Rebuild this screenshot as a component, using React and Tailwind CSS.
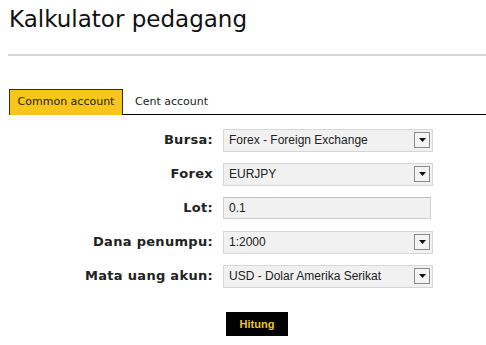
import React, { useState } from 'react';

const tahoma = { fontFamily: '"DejaVu Sans", Verdana, sans-serif' };

const Arrow = () => (
  <span className="flex h-[16px] w-[16px] items-center justify-center border border-[#8a8a8a] bg-[#f4f4f4]">
    <svg width="7" height="4" viewBox="0 0 7 4">
      <path d="M0 0h7L3.5 4z" fill="#111" />
    </svg>
  </span>
);

const SelectBox = ({ value, width = 'w-[210px]' }) => (
  <div className={`flex h-[23px] ${width} items-center justify-between border border-[#d6d6d6] bg-[#f1f1f1] pl-[5px] pr-[2px]`}>
    <span className="font-['Liberation_Sans',Arial,sans-serif] text-[12px] text-[#222]">{value}</span>
    <Arrow />
  </div>
);

const Row = ({ label, children }) => (
  <div className="flex h-[34px] items-center">
    <div style={tahoma} className="w-[214px] pr-[1px] text-right text-[13px] tracking-[0.3px] font-bold text-[#222]">{label}</div>
    <div className="ml-[9px]">{children}</div>
  </div>
);

export default function App() {
  const [tab, setTab] = useState('common');

  return (
    <div className="min-h-[345px] w-[486px] bg-white">
      <h1 style={tahoma} className="pl-[9px] pt-[4px] text-[23px] leading-[30px] text-[#111]">
        Kalkulator pedagang
      </h1>
      <div className="ml-[8px] mt-[20px] h-[2px] bg-[#d6d6d6]" />

      <div className="ml-[9px] mt-[33px] flex h-[26px] border-b border-black">
        <button
          onClick={() => setTab('common')}
          style={tahoma}
          className={`h-[26px] w-[114px] border border-b-0 text-[11px] ${tab === 'common' ? 'border-[#3a2e00] bg-[#f8c61a]' : 'border-transparent'} text-[#222]`}
        >
          Common account
        </button>
        <button
          onClick={() => setTab('cent')}
          style={tahoma}
          className={`h-[26px] px-[11px] border border-b-0 text-[11px] ${tab === 'cent' ? 'border-[#3a2e00] bg-[#f8c61a]' : 'border-transparent'} text-[#222]`}
        >
          Cent account
        </button>
      </div>

      <div className="mt-[8px]">
        <Row label="Bursa:"><SelectBox value="Forex - Foreign Exchange" /></Row>
        <Row label="Forex"><SelectBox value="EURJPY" /></Row>
        <Row label="Lot:">
          <div className="flex h-[22px] w-[208px] items-center border border-[#cfcfcf] border-t-[#bdbdbd] bg-[#f1f1f1] pl-[5px]">
            <span className="font-['Liberation_Sans',Arial,sans-serif] text-[12px] text-[#222]">0.1</span>
          </div>
        </Row>
        <Row label="Dana penumpu:"><SelectBox value="1:2000" /></Row>
        <Row label="Mata uang akun:"><SelectBox value="USD - Dolar Amerika Serikat" /></Row>
      </div>

      <div className="ml-[226px] mt-[17px]">
        <button className="h-[24px] w-[62px] bg-black font-['Liberation_Sans',Arial,sans-serif] text-[11px] font-bold text-[#f3c530]">
          Hitung
        </button>
      </div>
    </div>
  );
}
